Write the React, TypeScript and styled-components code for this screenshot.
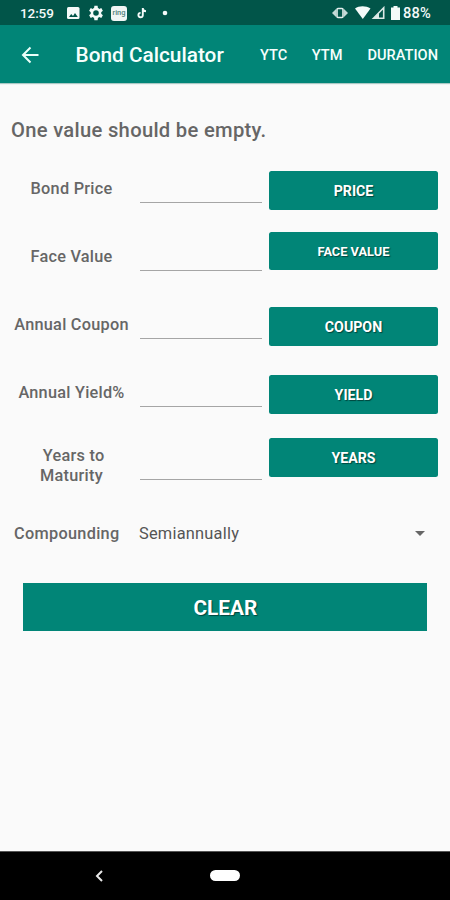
import React from "react";
import styled, { createGlobalStyle } from "styled-components";

const teal = "#018577";
const darkTeal = "#015549";

const GlobalStyle = createGlobalStyle`
  * { box-sizing: border-box; }
  body { margin: 0; background: #fafafa; font-family: Roboto, "Liberation Sans", sans-serif; }
`;

const Screen = styled.div`
  display: flex;
  flex-direction: column;
  width: 450px;
  height: 900px;
  background: #fafafa;
  color: #666;
  overflow: hidden;
`;

const StatusBar = styled.header`
  display: flex;
  align-items: center;
  justify-content: space-between;
  height: 25px;
  padding: 1px 19px 0 20px;
  background: ${darkTeal};
  color: #f4faf9;
  font-size: 13.5px;
  font-weight: 500;
`;

const StatusGroup = styled.div`
  display: flex;
  align-items: center;
  svg { display: block; flex: none; }
`;

const Clock = styled.span`
  width: 46px;
  letter-spacing: -0.1px;
`;

const Battery = styled.span`
  margin-left: 2px;
  font-size: 14.6px;
  letter-spacing: 0.2px;
`;

const GearIcon = styled.svg`
  margin-left: 8px;
`;

const RingBadge = styled.span`
  width: 16px;
  height: 15px;
  margin: 0 10px 0 7px;
  border-radius: 3px;
  background: #f1f6f5;
  color: #51827b;
  font-size: 7.5px;
  line-height: 13px;
  text-align: center;
`;

const AppBar = styled.nav`
  display: flex;
  align-items: center;
  height: 58px;
  padding: 2px 12px 0 20px;
  background: ${teal};
  color: #f6fffd;
  box-shadow: 0 1px 1px #a9c8c4;
`;

const Title = styled.h1`
  flex: 1;
  margin: 0 0 0 35.5px;
  font-size: 20.8px;
  line-height: 24px;
  font-weight: 500;
  white-space: nowrap;
`;

const Action = styled.button<{ $gap?: number }>`
  margin: 0 0 0 ${(p) => p.$gap ?? 0}px;
  padding: 0;
  border: 0;
  background: none;
  color: inherit;
  font: 500 14.6px Roboto, sans-serif;
`;

const Content = styled.main`
  flex: 1;
  display: flex;
  flex-direction: column;
`;

const Notice = styled.h2`
  height: 72px;
  margin: 0;
  padding: 35px 0 0 11px;
  font-size: 20.2px;
  line-height: 24px;
  font-weight: 500;
  letter-spacing: 0.3px;
`;

const FieldRow = styled.div<{ $height?: number }>`
  display: grid;
  grid-template-columns: 127px 122px 169px;
  column-gap: 6px;
  padding-left: 8px;
  height: ${(p) => p.$height ?? 68}px;
`;

const Label = styled.label<{ $top?: number }>`
  padding-top: ${(p) => p.$top ?? 24}px;
  font-size: 16.3px;
  line-height: 20px;
  font-weight: 500;
  letter-spacing: 0.25px;
  text-align: center;
  white-space: pre-line;
`;

const ValueInput = styled.input<{ $height?: number }>`
  width: 122px;
  margin-left: -1px;
  height: ${(p) => p.$height ?? 48}px;
  padding: 20px 2px 4px;
  border: 0;
  border-bottom: 1.5px solid #a5a5a5;
  outline: 0;
  background: none;
  font: 16px Roboto, sans-serif;
`;

const SolveButton = styled.button<{ $top?: number; $height?: number; $size?: number }>`
  height: ${(p) => p.$height ?? 39}px;
  margin-top: ${(p) => p.$top ?? 16}px;
  padding: 1px 0 0;
  border: 0;
  border-radius: 2.5px;
  background: ${teal};
  color: #fff;
  font: 700 ${(p) => p.$size ?? 14.2}px Roboto, sans-serif;
  text-shadow: 1px 1px 1px #00453d;
`;

const CompoundingRow = styled.div`
  display: flex;
  align-items: center;
  height: 67px;
  padding: 1px 25px 0 14px;
`;

const CompoundingLabel = styled.span`
  width: 125px;
  font-size: 16.3px;
  font-weight: 500;
  letter-spacing: 0.3px;
`;

const Choice = styled.span`
  flex: 1;
  color: #555;
  font-size: 16.4px;
  letter-spacing: 0.22px;
`;

const ClearButton = styled.button`
  width: 404px;
  height: 48px;
  margin: 17px 0 0 23.4px;
  padding: 2px 0 0;
  border: 0;
  background: ${teal};
  color: #fff;
  font: 700 20.8px Roboto, sans-serif;
  text-shadow: 1px 1px 1px #00453d;
`;

const NavigationBar = styled.footer`
  display: grid;
  grid-template-columns: 95px 115px 30px;
  align-items: center;
  height: 49px;
  padding-bottom: 1px;
  border-top: 1px solid #555;
  background: #000;
  svg { grid-column: 2; }
`;

const HomePill = styled.span`
  height: 11px;
  border-radius: 6px;
  background: #fff;
`;

type Field = {
  label: string;
  action: string;
  height?: number;
  labelTop?: number;
  lineTop?: number;
  buttonTop?: number;
  buttonHeight?: number;
  size?: number;
};

const fields: Field[] = [
  { label: "Bond Price", action: "PRICE" },
  { label: "Face Value", action: "FACE VALUE", buttonTop: 9, buttonHeight: 38, size: 12.8 },
  { label: "Annual Coupon", action: "COUPON" },
  { label: "Annual Yield%", action: "YIELD" },
  { label: "\u00a0Years to\nMaturity", action: "YEARS", height: 72, labelTop: 19, lineTop: 53, buttonTop: 11 },
];

export default function App() {
  return (
    <>
      <GlobalStyle />
      <Screen>
        <StatusBar>
          <StatusGroup>
            <Clock>12:59</Clock>
            <svg width="14" height="14" viewBox="0 0 14 14">
              <rect x="1" y="1" width="12.5" height="12" rx="1.5" fill="#f4faf9" />
              <path d="M3 11l2.2-3 1.8 2 2-3 2.8 4z" fill={darkTeal} />
            </svg>
            <GearIcon width="16" height="16" viewBox="2.6 2 20 20">
              <path fill="#f4faf9" d="M19.100 13a7 7 0 0 0 0-2l2.100-1.700-2-3.400-2.500 1a7 7 0 0 0-1.700-1L14.600 3h-4l-.4 2.900a7 7 0 0 0-1.700 1l-2.500-1-2 3.400L6.100 11a7 7 0 0 0 0 2L4 14.700l2 3.400 2.500-1a7 7 0 0 0 1.700 1l.4 2.900h4l.4-2.900a7 7 0 0 0 1.700-1l2.500 1 2-3.400zM12.600 15.500a3.500 3.500 0 1 1 0-7 3.500 3.500 0 0 1 0 7z" />
            </GearIcon>
            <RingBadge>ring</RingBadge>
            <svg width="10" height="12" viewBox="0 0 10 12" fill="none" stroke="#f4faf9" strokeWidth="1.9">
              <path d="M5.800 1v7.200a2.200 2.200 0 1 1-2.200-2.300M5.800 1.500c.3 1.700 1.400 2.600 3.200 2.700" />
            </svg>
            <svg width="26" height="6" viewBox="0 0 26 6"><circle cx="18" cy="3" r="2.300" fill="#f4faf9" /></svg>
          </StatusGroup>
          <StatusGroup>
            <svg width="16" height="12" viewBox="0 0 16 12">
              <path d="M0 6l4-4v8zM16 6l-4-4v8z" fill="#c4dad7" />
              <rect x="5" y="1.500" width="6" height="9" rx="1" fill="none" stroke="#e4efed" strokeWidth="1.600" />
            </svg>
            <svg width="23" height="14" viewBox="0 0 23 14"><path d="M7 2.500C11 -.5 18 -.5 22.500 2.500L14.800 13z" fill="#f4faf9" /></svg>
            <svg width="15" height="14" viewBox="0 0 15 14">
              <path d="M2.500 12.200L12.700 1.800v10.400z" fill="none" stroke="#dce9e7" strokeWidth="1.600" />
              <path d="M2 13l6-6v6z" fill="#dce9e7" />
            </svg>
            <svg width="15" height="14" viewBox="-1 0 15 14"><path d="M6.500 0h4v1.500H13V14H4V1.500h2.500z" fill="#f4faf9" /></svg>
            <Battery>88%</Battery>
          </StatusGroup>
        </StatusBar>

        <AppBar>
          <svg width="20" height="18" viewBox="0 0 20 18" fill="none" stroke="#eafff9" strokeWidth="2">
            <path d="M18.500 9H3M10.500 1.500L3 9l7.500 7.500" />
          </svg>
          <Title>Bond Calculator</Title>
          <Action>YTC</Action>
          <Action $gap={24.5}>YTM</Action>
          <Action $gap={25}>DURATION</Action>
        </AppBar>

        <Content>
          <Notice>One value should be empty.</Notice>
          {fields.map((f) => (
            <FieldRow key={f.action} $height={f.height}>
              <Label $top={f.labelTop} htmlFor={f.action}>{f.label}</Label>
              <ValueInput id={f.action} $height={f.lineTop} />
              <SolveButton $top={f.buttonTop} $height={f.buttonHeight} $size={f.size}>{f.action}</SolveButton>
            </FieldRow>
          ))}
          <CompoundingRow>
            <CompoundingLabel>Compounding</CompoundingLabel>
            <Choice>Semiannually</Choice>
            <svg width="10" height="5" viewBox="0 0 10 5"><path d="M0 0h10L5 5z" fill="#666" /></svg>
          </CompoundingRow>
          <ClearButton>CLEAR</ClearButton>
        </Content>

        <NavigationBar>
          <svg width="9" height="12" viewBox="0 0 9 12" fill="none" stroke="#e8e8e8" strokeWidth="2">
            <path d="M7 1L2 6l5 5" />
          </svg>
          <HomePill />
        </NavigationBar>
      </Screen>
    </>
  );
}
